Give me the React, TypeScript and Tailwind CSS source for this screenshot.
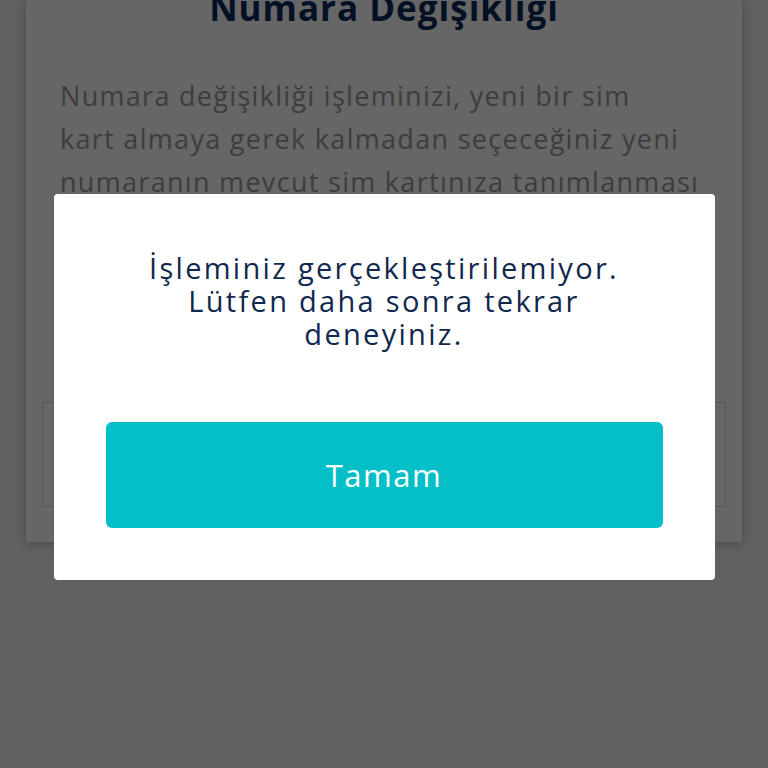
export default function App() {
  return (
    <div className="relative h-[768px] w-full overflow-hidden bg-[#f2f2f2] font-['Open_Sans',sans-serif]">
      <div className="mx-[26px] flex h-[542px] flex-col bg-white shadow-[0_2px_10px_rgba(0,0,0,0.25)]">
        <h1 className="-mt-[14px] text-center text-[35px] font-bold leading-[44px] tracking-[1px] text-[#0b2a5a]">
          Numara Değişikliği
        </h1>
        <p className="mt-[44px] pl-[34px] text-[27px] leading-[43px] tracking-[1.3px] whitespace-nowrap text-[#9a9a9a]">
          Numara değişikliği işleminizi, yeni bir sim
          <br />
          kart almaya gerek kalmadan seçeceğiniz yeni
          <br />
          numaranın mevcut sim kartınıza tanımlanması
        </p>
        <div className="mx-[16px] mt-auto mb-[35px] h-[105px] border border-[#d6d6d6]" />
      </div>

      <div className="absolute inset-0 flex items-center justify-center bg-black/60">
        <div className="mt-[6px] flex w-[661px] flex-col items-center rounded-[4px] bg-white px-[52px] pt-[57px] pb-[52px]">
          <p className="text-center text-[29px] leading-[33px] tracking-[2.3px] text-[#10284d]">
            İşleminiz gerçekleştirilemiyor.
            <br />
            Lütfen daha sonra tekrar
            <br />
            deneyiniz.
          </p>
          <button className="mt-[72px] flex h-[106px] w-full items-center justify-center rounded-[6px] bg-[#04bec8] text-[31px] tracking-[1.5px] text-white">
            Tamam
          </button>
        </div>
      </div>
    </div>
  )
}
